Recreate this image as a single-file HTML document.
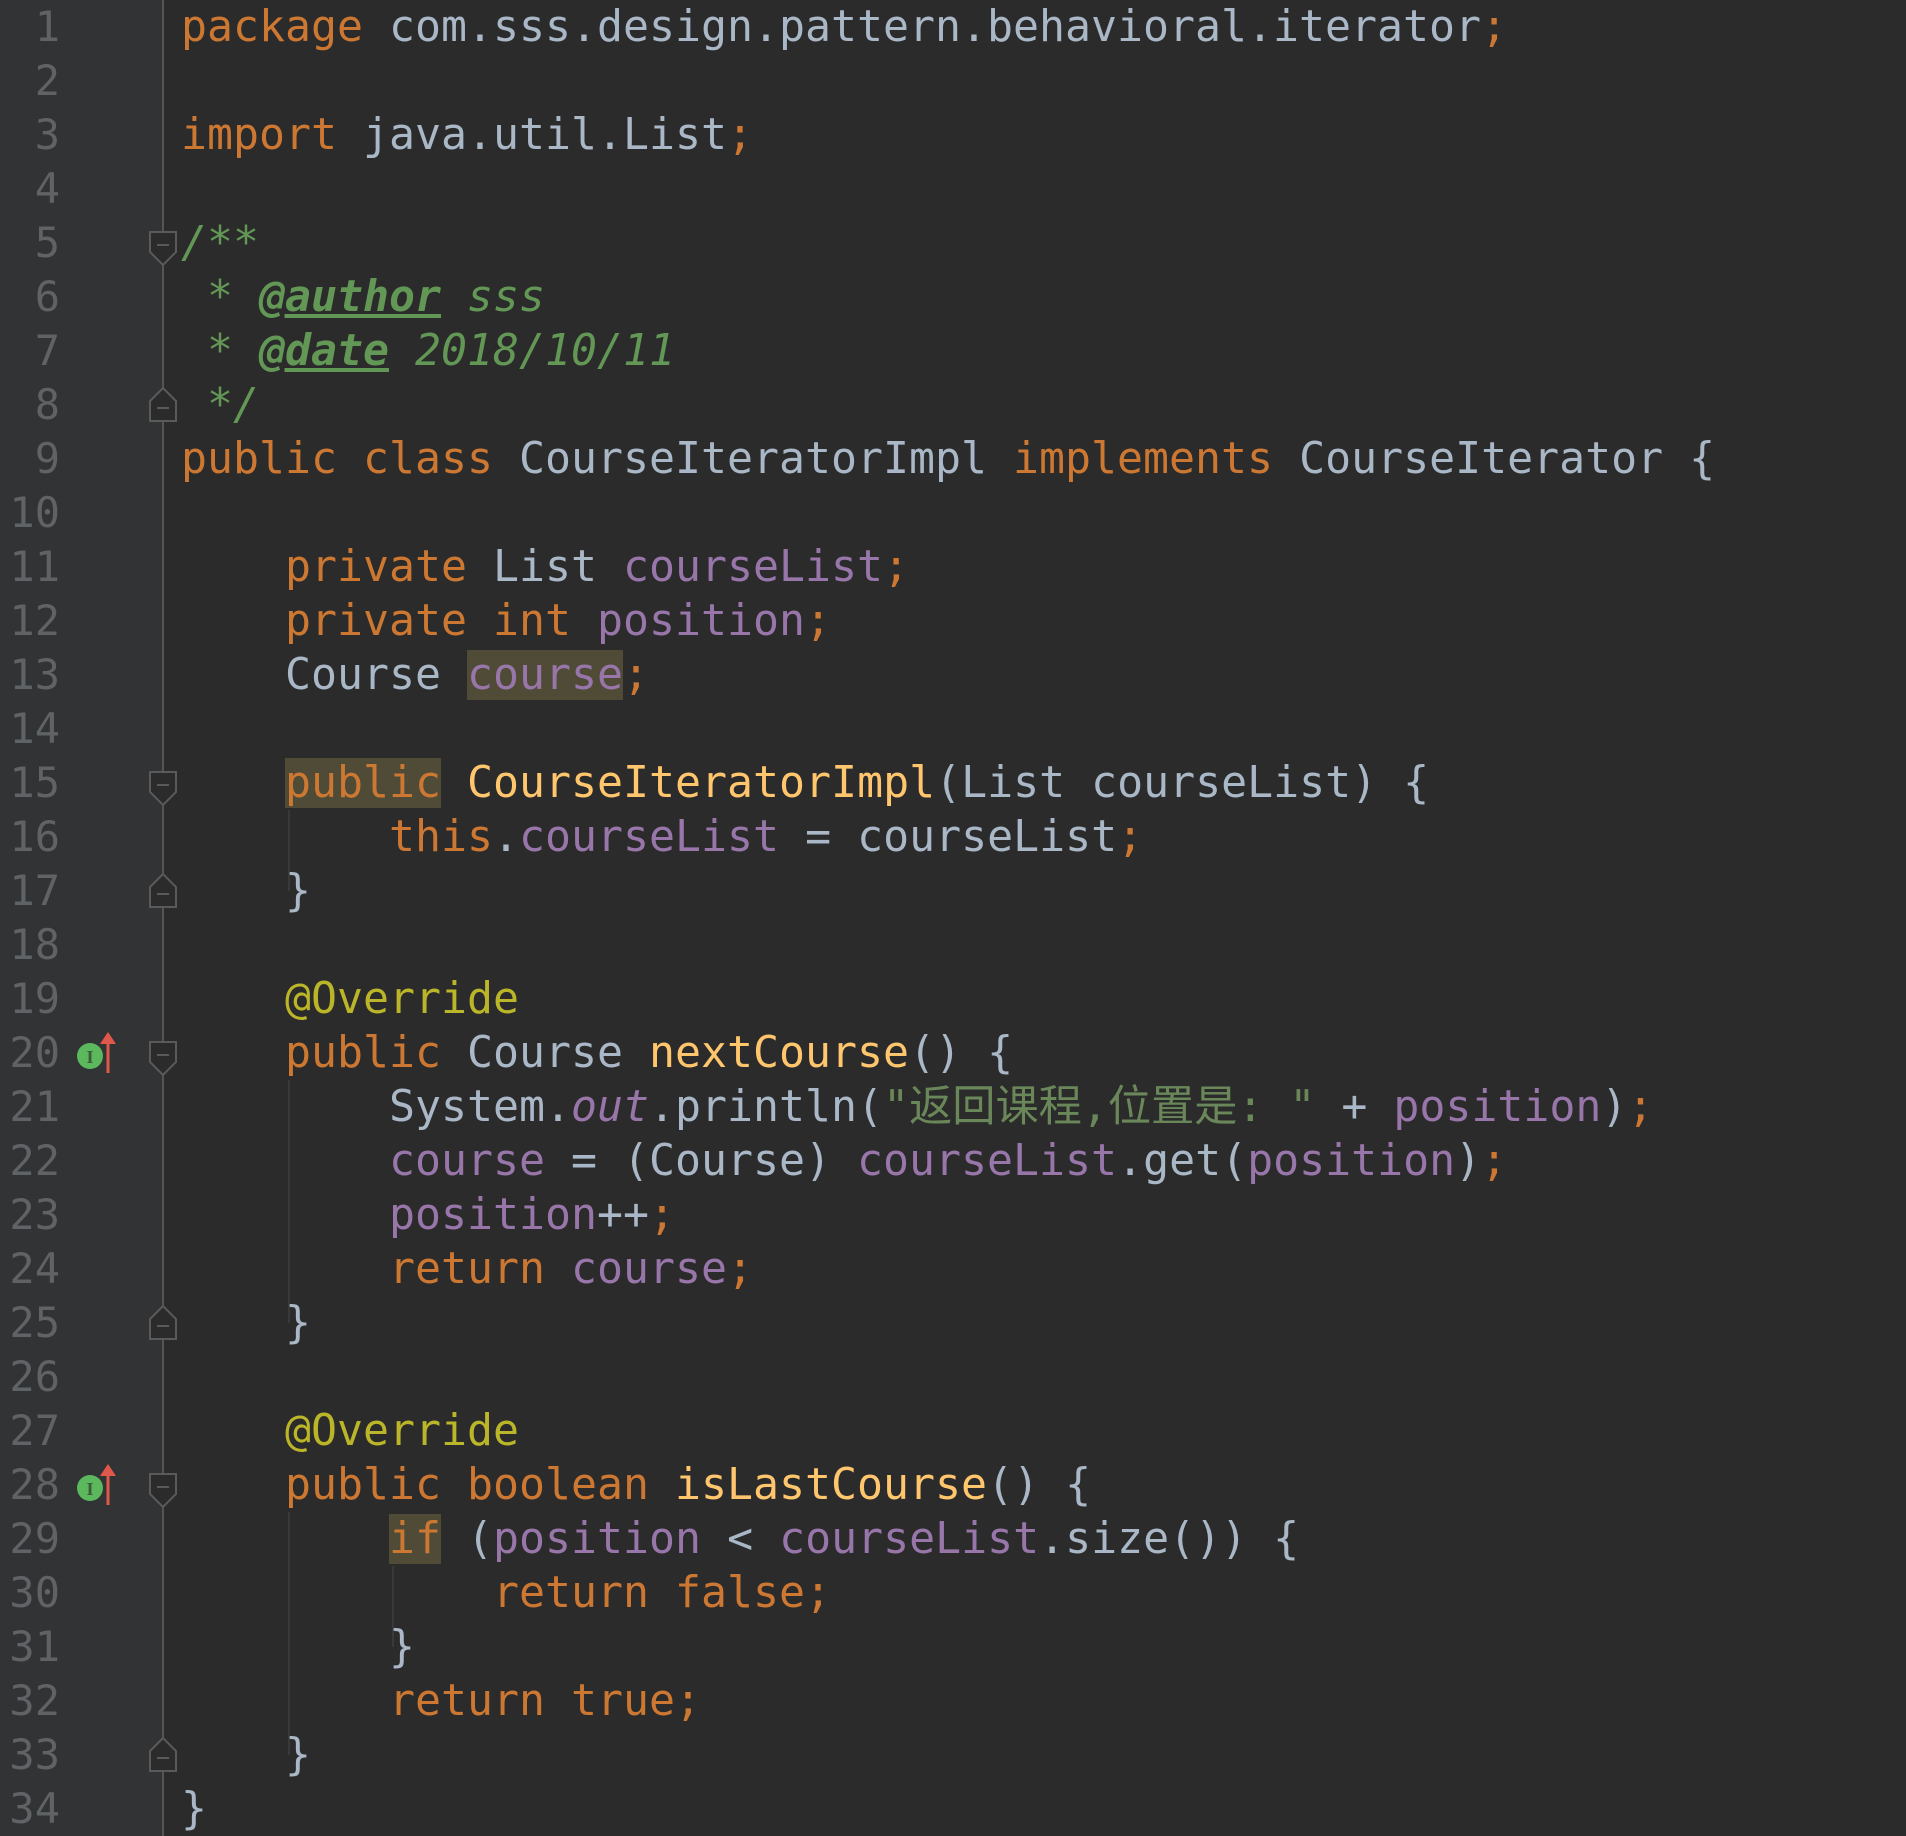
<!DOCTYPE html>
<html><head><meta charset="utf-8"><style>
html,body{margin:0;padding:0;width:1906px;height:1836px;background:#2b2b2b;overflow:hidden}
.gut{position:absolute;left:0;top:0;width:163px;height:1836px;background:#313335}
.sep{position:absolute;left:162px;top:0;width:2px;height:1836px;background:#555555}
.nums{position:absolute;left:0;top:0;width:60px;text-align:right;font:42px/54px "DejaVu Sans Mono","Liberation Mono",monospace;color:#606366;margin:0}
pre.code{position:absolute;left:181px;top:0;margin:0;font:43.2px/54px "DejaVu Sans Mono","Noto Sans CJK SC",monospace;color:#a9b7c6;white-space:pre}
.k{color:#cc7832}.f{color:#9876aa}.c{color:#629755;font-style:italic}.ct{color:#629755;font-style:italic;font-weight:bold;text-decoration:underline}
.a{color:#bbb529}.m{color:#ffc66d}.s{color:#6a8759}.i{font-style:italic;color:#9876aa}
.h{background:#4f4b37}
.guide{position:absolute;width:2px;background:#393939}
</style></head><body>
<div class="gut"></div>
<div class="sep"></div>
<pre class="nums">1
2
3
4
5
6
7
8
9
10
11
12
13
14
15
16
17
18
19
20
21
22
23
24
25
26
27
28
29
30
31
32
33
34</pre>
<div class="guide" style="left:288px;top:810px;height:81px"></div>
<div class="guide" style="left:288px;top:1080px;height:243px"></div>
<div class="guide" style="left:288px;top:1512px;height:243px"></div>
<div class="guide" style="left:392px;top:1566px;height:81px"></div>
<svg width="1906" height="1836" style="position:absolute;left:0;top:0">
<g fill="#2b2b2b" stroke="#5a5a5a" stroke-width="2">
<path d="M150 232 H176 V252 L163 265 L150 252 Z"/><path d="M157 245 H169"/>
<path d="M150 772 H176 V792 L163 805 L150 792 Z"/><path d="M157 785 H169"/>
<path d="M150 1042 H176 V1062 L163 1075 L150 1062 Z"/><path d="M157 1055 H169"/>
<path d="M150 1474 H176 V1494 L163 1507 L150 1494 Z"/><path d="M157 1487 H169"/>
<path d="M150 421 H176 V401 L163 388 L150 401 Z"/><path d="M157 408 H169"/>
<path d="M150 907 H176 V887 L163 874 L150 887 Z"/><path d="M157 894 H169"/>
<path d="M150 1339 H176 V1319 L163 1306 L150 1319 Z"/><path d="M157 1326 H169"/>
<path d="M150 1771 H176 V1751 L163 1738 L150 1751 Z"/><path d="M157 1758 H169"/>
</g>
<g>
<circle cx="90" cy="1056" r="13" fill="#5cb85c"/><text x="90" y="1063" font-family="Liberation Serif" font-size="18" font-weight="bold" fill="#3c5a3c" text-anchor="middle">I</text>
<path d="M108 1073 V1040" stroke="#e0584a" stroke-width="3"/><path d="M100 1044 L108 1032 L116 1044 Z" fill="#e0584a"/>
<circle cx="90" cy="1488" r="13" fill="#5cb85c"/><text x="90" y="1495" font-family="Liberation Serif" font-size="18" font-weight="bold" fill="#3c5a3c" text-anchor="middle">I</text>
<path d="M108 1505 V1472" stroke="#e0584a" stroke-width="3"/><path d="M100 1476 L108 1464 L116 1476 Z" fill="#e0584a"/>
</g>
</svg>
<pre class="code"><span class="k">package</span> com.sss.design.pattern.behavioral.iterator<span class="k">;</span>

<span class="k">import</span> java.util.List<span class="k">;</span>

<span class="c">/**</span>
<span class="c"> * </span><span class="ct">@author</span><span class="c"> sss</span>
<span class="c"> * </span><span class="ct">@date</span><span class="c"> 2018/10/11</span>
<span class="c"> */</span>
<span class="k">public class</span> CourseIteratorImpl <span class="k">implements</span> CourseIterator {

    <span class="k">private</span> List <span class="f">courseList</span><span class="k">;</span>
    <span class="k">private int</span> <span class="f">position</span><span class="k">;</span>
    Course <span class="f h">course</span><span class="k">;</span>

    <span class="k h">public</span> <span class="m">CourseIteratorImpl</span>(List courseList) {
        <span class="k">this</span>.<span class="f">courseList</span> = courseList<span class="k">;</span>
    }

    <span class="a">@Override</span>
    <span class="k">public</span> Course <span class="m">nextCourse</span>() {
        System.<span class="i">out</span>.println(<span class="s">"返回课程,位置是: "</span> + <span class="f">position</span>)<span class="k">;</span>
        <span class="f">course</span> = (Course) <span class="f">courseList</span>.get(<span class="f">position</span>)<span class="k">;</span>
        <span class="f">position</span>++<span class="k">;</span>
        <span class="k">return</span> <span class="f">course</span><span class="k">;</span>
    }

    <span class="a">@Override</span>
    <span class="k">public boolean</span> <span class="m">isLastCourse</span>() {
        <span class="k h">if</span> (<span class="f">position</span> &lt; <span class="f">courseList</span>.size()) {
            <span class="k">return false;</span>
        }
        <span class="k">return true;</span>
    }
}</pre>
</body></html>
